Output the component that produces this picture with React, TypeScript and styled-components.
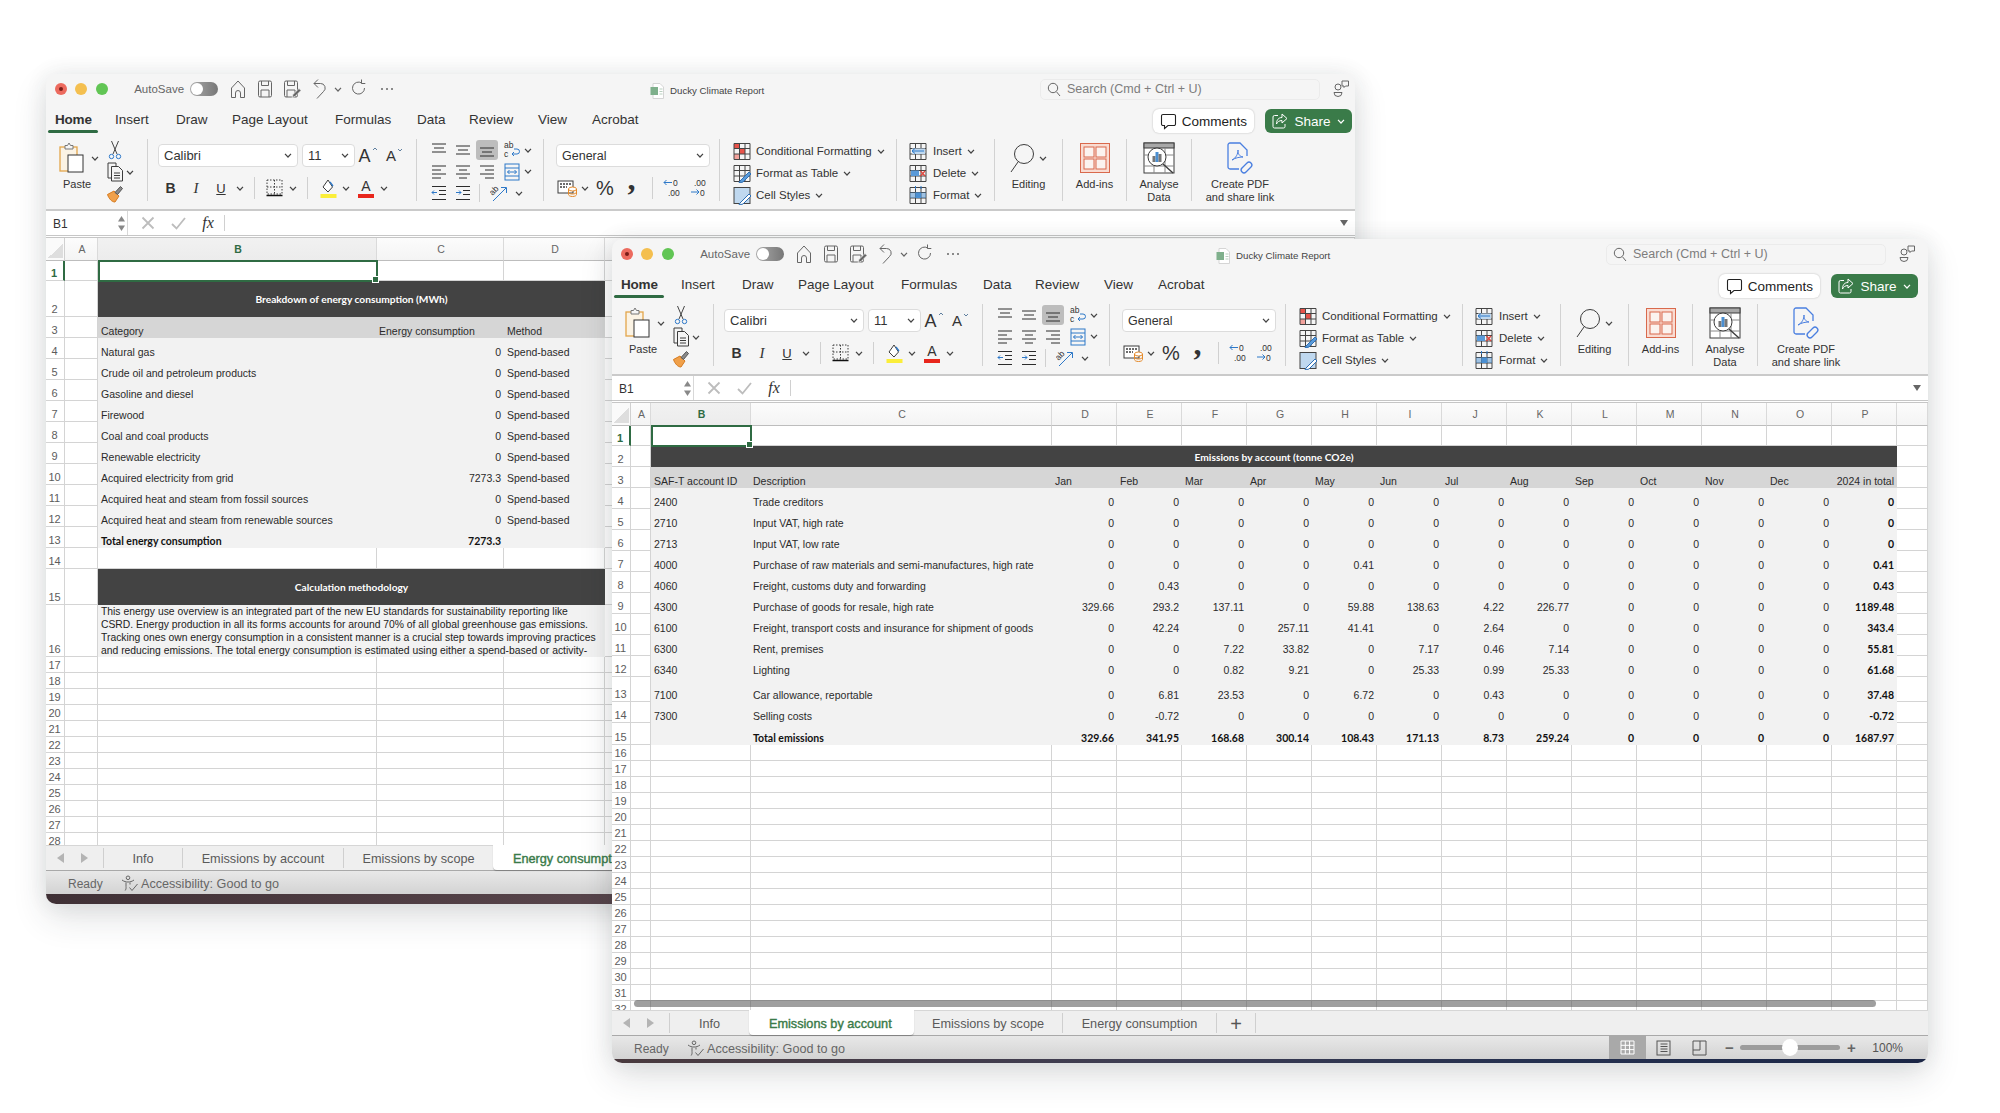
import React from 'react'
import styled, { createGlobalStyle } from 'styled-components'

const GlobalStyle = createGlobalStyle`
    html, body { margin: 0; padding: 0; background: #fff; }
    body { width: 2000px; height: 1113px; overflow: hidden; font-family: "Liberation Sans", Arial, sans-serif; }
`

const Page = styled.div`
    position: relative;
    width: 2000px;
    height: 1113px;
    background: #fff;
    overflow: hidden;
`

const Win = styled.div<{ $x: number; $y: number; $w: number; $h: number }>`
    position: absolute;
    left: ${p => p.$x}px;
    top: ${p => p.$y}px;
    width: ${p => p.$w}px;
    height: ${p => p.$h}px;
    border-radius: 10px;
    background: #f5f5f5;
    box-shadow: 0 14px 34px rgba(40, 50, 60, 0.14), 0 0 22px rgba(40, 50, 60, 0.09);
    overflow: hidden;
    display: flex;
    flex-direction: column;
`

const TitleBar = styled.div`
    height: 30px;
    display: grid;
    grid-template-columns: 604px 390px 280px auto;
    align-items: center;
`

const LeftCluster = styled.div`
    display: flex;
    align-items: center;
    padding-left: 9px;
`

const Light = styled.span<{ $c: string }>`
    width: 12px;
    height: 12px;
    border-radius: 50%;
    background: ${p => p.$c};
    margin-right: 8.4px;
    flex: none;
    display: flex;
    align-items: center;
    justify-content: center;
`

const Pip = styled.span`
    width: 4px;
    height: 4px;
    border-radius: 50%;
    background: #7a1c17;
`

const AutoSave = styled.span`
    margin-left: 18px;
    font-size: 11.5px;
    color: #666;
`

const Toggle = styled.span`
    margin: 0 6px 0 6px;
    width: 28px;
    height: 14px;
    border-radius: 8px;
    background: linear-gradient(90deg, #aaa, #777);
    position: relative;
    flex: none;
    &::after {
        content: '';
        position: absolute;
        left: 1px;
        top: 1px;
        width: 12px;
        height: 12px;
        border-radius: 50%;
        background: #fff;
    }
`

const Slot = styled.div<{ $w: number }>`
    width: ${p => p.$w}px;
    flex: none;
    display: flex;
    align-items: center;
    justify-content: center;
`

const FileTitle = styled.div`
    display: flex;
    align-items: center;
    gap: 6px;
    font-size: 9.7px;
    color: #444;
    padding-top: 3px;
`

const Search = styled.div`
    height: 21px;
    box-sizing: border-box;
    border: 1px solid #ebebeb;
    border-radius: 5px;
    display: flex;
    align-items: center;
    gap: 6px;
    padding-left: 6px;
    font-size: 12.5px;
    color: #7d7d7d;
    font-weight: 500;
`

const People = styled.div`
    padding-left: 13px;
    display: flex;
`

const TabRow = styled.div<{ $inset: number }>`
    height: 30px;
    display: flex;
    align-items: center;
    justify-content: space-between;
    padding: 0 ${p => p.$inset}px 0 9px;
`

const RibbonTabs = styled.div`
    display: grid;
    grid-template-columns: 60px 61px 56px 103px 82px 52px 69px 54px auto;
    font-size: 13.5px;
    color: #333;
`

const RibbonTab = styled.div<{ $on?: boolean }>`
    position: relative;
    height: 30px;
    line-height: 32px;
    font-weight: ${p => (p.$on ? 700 : 400)};
    letter-spacing: ${p => (p.$on ? '-0.2px' : '0')};
    &::after {
        content: '';
        display: ${p => (p.$on ? 'block' : 'none')};
        position: absolute;
        left: -7px;
        top: 26px;
        width: 50px;
        height: 3px;
        border-radius: 2px;
        background: #2f6b43;
    }
`

const RowEnd = styled.div`
    display: flex;
    gap: 11px;
    margin-top: 3px;
`

const CommentsBtn = styled.div`
    width: 101px;
    height: 24px;
    box-sizing: border-box;
    padding-top: 1px;
    background: #fff;
    border-radius: 6px;
    box-shadow: 0 0 2px rgba(0, 0, 0, 0.25);
    display: flex;
    align-items: center;
    justify-content: center;
    gap: 5px;
    font-size: 13.5px;
    color: #222;
`

const ShareBtn = styled.div`
    width: 87px;
    height: 24px;
    box-sizing: border-box;
    padding-top: 1px;
    background: #3a7b49;
    border-radius: 6px;
    display: flex;
    align-items: center;
    justify-content: center;
    gap: 6px;
    font-size: 13.5px;
    color: #fff;
`

const Ribbon = styled.div`
    height: 75px;
    box-sizing: content-box;
    border-bottom: 2px solid #cacaca;
    display: flex;
`

const Group = styled.div<{ $w: number; $pad?: number; $last?: boolean }>`
    width: ${p => p.$w}px;
    box-sizing: border-box;
    height: 62px;
    margin-top: 5px;
    padding-left: ${p => p.$pad || 0}px;
    border-right: ${p => (p.$last ? '0' : '1px solid #d2d2d2')};
    display: flex;
    flex: none;
`

const Stack = styled.div<{ $top?: number }>`
    display: flex;
    flex-direction: column;
    padding-top: ${p => p.$top || 0}px;
`

const Line = styled.div<{ $h: number; $top?: number }>`
    height: ${p => p.$h}px;
    margin-top: ${p => p.$top || 0}px;
    display: flex;
    align-items: center;
    flex: none;
`

const Label = styled.div`
    font-size: 11px;
    line-height: 12.5px;
    color: #333;
    text-align: center;
    white-space: nowrap;
`

const PasteCol = styled.div`
    width: 32px;
    flex: none;
    display: flex;
    flex-direction: column;
    align-items: flex-start;
    gap: 5px;
    padding-top: 3px;
    ${Label} { margin-left: 4px; }
`

const PasteChev = styled.div`
    width: 8px;
    height: 38px;
    display: flex;
    align-items: center;
    margin-right: 5px;
`

const Combo = styled.div<{ $w: number; $fs?: number }>`
    width: ${p => p.$w}px;
    height: 23px;
    box-sizing: border-box;
    flex: none;
    background: #fff;
    border: 1px solid #dcdcdc;
    border-radius: 4px;
    display: flex;
    align-items: center;
    justify-content: space-between;
    padding: 0 5px;
    font-size: ${p => p.$fs || 12.5}px;
    color: #333;
`

const Sep = styled.div<{ $h?: number }>`
    width: 1px;
    height: ${p => p.$h || 22}px;
    background: #d0d0d0;
`

const Glyph = styled.span<{ $size: number; $bold?: boolean; $serif?: boolean; $italic?: boolean; $under?: boolean; $c?: string }>`
    font-size: ${p => p.$size}px;
    font-weight: ${p => (p.$bold ? 700 : 400)};
    font-style: ${p => (p.$italic ? 'italic' : 'normal')};
    font-family: ${p => (p.$serif ? '"Liberation Serif", serif' : 'inherit')};
    text-decoration: ${p => (p.$under ? 'underline' : 'none')};
    color: ${p => p.$c || '#333'};
    line-height: 1;
`

const GrowA = styled.span`
    display: flex;
    align-items: flex-start;
    gap: 1px;
`

const ColorA = styled.span<{ $c: string }>`
    display: flex;
    flex-direction: column;
    align-items: center;
    font-size: 14px;
    line-height: 15px;
    color: #333;
    &::after {
        content: '';
        width: 16px;
        height: 4px;
        background: ${p => p.$c};
    }
`

const OnBox = styled.div`
    width: 22px;
    height: 20px;
    border-radius: 3px;
    background: #bdbdbd;
    display: flex;
    align-items: center;
    justify-content: center;
`

const Comma = styled.span`
    font-family: "Liberation Serif", serif;
    font-weight: 700;
    font-size: 32px;
    line-height: 22px;
    color: #333;
    transform: translateY(-9px);
`

const ListRow = styled.div`
    height: 22px;
    flex: none;
    display: flex;
    align-items: center;
    font-size: 11.5px;
    color: #333;
    white-space: nowrap;
    gap: 5px;
`

const BigCol = styled.div`
    flex: 1;
    display: flex;
    flex-direction: column;
    align-items: center;
`

const BigIcon = styled.div`
    height: 38px;
    flex: none;
    display: flex;
    align-items: center;
    gap: 5px;
    margin-bottom: 1px;
`

const Formula = styled.div`
    height: 27px;
    box-sizing: border-box;
    background: #fff;
    border-bottom: 3px double #c6c6c6;
    display: flex;
    align-items: center;
    padding-right: 7px;
`

const NameBox = styled.div`
    width: 82px;
    height: 100%;
    box-sizing: border-box;
    border-right: 1px solid #d8d8d8;
    display: flex;
    align-items: center;
    justify-content: space-between;
    padding: 1px 2px 0 7px;
    font-size: 12px;
    color: #333;
`

const FormulaIcons = styled.div`
    display: flex;
    align-items: center;
    flex: 1;
    padding-left: 5px;
`

const FxText = styled.span`
    font-family: "Liberation Serif", serif;
    font-style: italic;
    font-size: 16px;
    color: #333;
`

const SheetArea = styled.div`
    position: relative;
    height: 607px;
    background: #fff;
    overflow: hidden;
`

const Grid = styled.div<{ $cols: string; $rows: string }>`
    display: grid;
    grid-template-columns: ${p => p.$cols};
    grid-template-rows: ${p => p.$rows};
    height: 100%;
    font-size: 10.5px;
    color: #2b2b2b;
`

const Corner = styled.div`
    background: #fafafa;
    border-right: 1px solid #d0d0d0;
    border-bottom: 1px solid #bdbdbd;
    display: flex;
    align-items: flex-end;
    justify-content: flex-end;
    padding: 0 1px 2px 0;
    &::after {
        content: '';
        width: 15px;
        height: 15px;
        background: linear-gradient(135deg, transparent 50%, #dedede 50%);
    }
`

const ColHead = styled.div<{ $on?: boolean }>`
    box-sizing: border-box;
    background: ${p => (p.$on ? 'linear-gradient(#f1f1f1, #ececec)' : 'linear-gradient(#fcfcfc, #f4f4f4)')};
    border-right: 1px solid #dadada;
    border-bottom: 1px solid #bdbdbd;
    display: flex;
    align-items: center;
    justify-content: center;
    padding: 0 0 1px 2px;
    font-size: 10.5px;
    color: ${p => (p.$on ? '#2f6b43' : '#666')};
    font-weight: ${p => (p.$on ? 700 : 400)};
`

const RowHead = styled.div<{ $on?: boolean }>`
    box-sizing: border-box;
    background: #fff;
    border-right: ${p => (p.$on ? '2px solid #2f6b43' : '1px solid #d4d4d4')};
    border-bottom: 1px solid #d4d4d4;
    display: flex;
    align-items: flex-end;
    justify-content: center;
    font-size: 11px;
    line-height: 13px;
    padding-right: 1px;
    color: ${p => (p.$on ? '#2f6b43' : '#5c5c5c')};
    font-weight: ${p => (p.$on ? 700 : 400)};
`

const Blank = styled.div`
    box-sizing: border-box;
    border-right: 1px solid #d4d4d4;
    border-bottom: 1px solid #d4d4d4;
    min-width: 0;
`

const Selected = styled.div`
    box-sizing: border-box;
    border: 2px solid #2f6b43;
    position: relative;
    margin: -1px -1px -1px 0;
    z-index: 3;
    &::after {
        content: '';
        position: absolute;
        right: -3px;
        bottom: -3px;
        width: 5px;
        height: 5px;
        background: #2f6b43;
        border: 1px solid #fff;
    }
`

const Band = styled.div<{ $span: number }>`
    grid-column: span ${p => p.$span};
    background: #434343;
    color: #fff;
    font-family: Lato, "Liberation Sans", sans-serif;
    font-weight: 700;
    font-size: 10.2px;
    display: flex;
    align-items: center;
    justify-content: center;
    white-space: nowrap;
`

const Cell = styled.div<{ $head?: boolean; $right?: boolean; $bold?: boolean; $tight?: boolean }>`
    background: ${p => (p.$head ? '#d6d6d6' : '#f2f2f2')};
    display: flex;
    align-items: flex-end;
    justify-content: ${p => (p.$right ? 'flex-end' : 'flex-start')};
    padding: 0 3px 0 ${p => (p.$tight ? 2 : 3)}px;
    line-height: 13px;
    white-space: nowrap;
    overflow: hidden;
    min-width: 0;
    font-family: ${p => (p.$bold ? 'Lato, "Liberation Sans", sans-serif' : 'inherit')};
    font-weight: ${p => (p.$bold ? 700 : 400)};
    color: ${p => (p.$bold ? '#111' : 'inherit')};
`

const Note = styled.div<{ $span: number }>`
    grid-column: span ${p => p.$span};
    background: #f2f2f2;
    padding: 0 3px;
    font-size: 10.35px;
    line-height: 13px;
    white-space: nowrap;
    overflow: hidden;
    color: #222;
`

const ScrollThumb = styled.div`
    position: absolute;
    left: 22px;
    bottom: 3px;
    width: 1242px;
    height: 7px;
    border-radius: 4px;
    background: rgba(90, 90, 90, 0.58);
`

const SheetTabs = styled.div`
    height: 26px;
    box-sizing: border-box;
    background: #efefef;
    border-top: 1px solid #d6d6d6;
    border-bottom: 1px solid #a9a9a9;
    display: flex;
    position: relative;
    font-size: 12.7px;
    color: #5a5a5a;
`

const Arrows = styled.div`
    width: 57px;
    flex: none;
    box-sizing: border-box;
    display: flex;
    align-items: center;
    gap: 17px;
    padding-left: 11px;
`

const Tri = styled.span<{ $dir: 'l' | 'r' }>`
    width: 0;
    height: 0;
    border-top: 5px solid transparent;
    border-bottom: 5px solid transparent;
    border-right: ${p => (p.$dir === 'l' ? '7px solid #b4b4b4' : '0')};
    border-left: ${p => (p.$dir === 'r' ? '7px solid #b4b4b4' : '0')};
`

const SheetTab = styled.div<{ $w: number; $on?: boolean; $noSep?: boolean }>`
    width: ${p => p.$w}px;
    flex: none;
    height: ${p => (p.$on ? '25px' : '20px')};
    margin-top: ${p => (p.$on ? '-1px' : '2px')};
    box-sizing: border-box;
    display: flex;
    align-items: center;
    justify-content: ${p => (p.$on ? 'flex-start' : 'center')};
    padding-left: ${p => (p.$on ? '20px' : '0')};
    padding-top: ${p => (p.$on ? '3px' : '1px')};
    white-space: nowrap;
    overflow: hidden;
    background: ${p => (p.$on ? '#fff' : 'transparent')};
    border-radius: ${p => (p.$on ? '0 0 4px 4px' : '0')};
    box-shadow: ${p => (p.$on ? '0 1px 1px rgba(0,0,0,.25)' : 'none')};
    color: ${p => (p.$on ? '#3a7b49' : 'inherit')};
    -webkit-text-stroke: ${p => (p.$on ? '0.4px #3a7b49' : '0')};
    border-left: ${p => (p.$noSep || p.$on ? '0' : '1px solid #cfcfcf')};
`

const TabEnd = styled.div`
    width: 1px;
    height: 20px;
    margin-top: 2px;
    background: #cfcfcf;
`

const StatusBar = styled.div`
    height: 23px;
    box-sizing: border-box;
    background: linear-gradient(#e8e8e8, #d3d3d3);
    display: flex;
    align-items: center;
    font-size: 12px;
    color: #666;
    flex: none;
`

const Ready = styled.span`
    margin-left: 22px;
    width: 53px;
    padding-top: 2px;
`

const Access = styled.span`
    display: flex;
    align-items: center;
    gap: 3px;
    font-size: 12.6px;
    padding-top: 2px;
`

const ViewArea = styled.div`
    margin-left: auto;
    padding-right: 25px;
    display: flex;
    align-items: center;
    height: 100%;
`

const ViewOn = styled.div`
    width: 37px;
    height: 100%;
    background: #a9a9a9;
    display: flex;
    align-items: center;
    justify-content: center;
`

const ZoomTrack = styled.div`
    width: 100px;
    height: 5px;
    border-radius: 3px;
    background: #9c9c9c;
    position: relative;
    margin-left: -1px;
    &::after {
        content: '';
        position: absolute;
        left: 42px;
        top: -6px;
        width: 16px;
        height: 17px;
        border-radius: 50%;
        background: #fff;
    }
`

const Percent = styled.span`
    margin-left: 10px;
    font-size: 12px;
    color: #555;
`

const Strip = styled.div<{ $h: number; $bg: string }>`
    height: ${p => p.$h}px;
    flex: none;
    background: ${p => p.$bg};
`

type IcProps = { w: number; h: number; s?: string; sw?: number; children: React.ReactNode }
const Ic = ({ w, h, s = '#3c3c3c', sw = 1, children }: IcProps) => (
    <svg width={w} height={h} viewBox={`0 0 ${w} ${h}`} fill="none" stroke={s} strokeWidth={sw} style={{ flex: 'none' }}>
        {children}
    </svg>
)

const Chev = ({ c = '#444' }: { c?: string }) => (
    <Ic w={8} h={5} s={c} sw={1.2}><polyline points="1,0.8 4,4 7,0.8" /></Ic>
)

const Caret = ({ down }: { down?: boolean }) => (
    <Ic w={6} h={4} s="#5f7f9f"><path d={down ? 'M1 1l2 2 2-2' : 'M1 3l2-2 2 2'} /></Ic>
)

const SMALL = { fontSize: 8.5, fontFamily: 'Liberation Sans', fill: '#333', stroke: 'none' } as const

const HomeIcon = () => (
    <Ic w={18} h={20} s="#666"><path d="M2.5 9 9 2l6.5 7v9.5h-4V14a2.5 2.5 0 0 0-5 0v4.5h-4z" /></Ic>
)
const SaveShape = () => (
    <>
        <path d="M1.5 3.5A1.5 1.5 0 0 1 3 2h10a1.5 1.5 0 0 1 1.5 1.5v13A1.5 1.5 0 0 1 13 18H3a1.5 1.5 0 0 1-1.5-1.5z" />
        <path d="M4.5 2v4.5h7V2M4 18v-7h8v7" />
    </>
)
const SaveIcon = () => <Ic w={16} h={20} s="#666"><SaveShape /></Ic>
const SaveAsIcon = () => (
    <Ic w={18} h={20} s="#666">
        <SaveShape />
        <path d="M9 18.5l1-3 6-6 2 2-6 6z" fill="#666" stroke="#f5f5f5" strokeWidth={0.7} />
    </Ic>
)
const UndoIcon = () => (
    <Ic w={16} h={22} s="#666"><path d="M3 5.5h6.5a4.5 4.5 0 0 1 3 8L6 20.5" /><path d="M7 1.5 3 5.5l4 4" /></Ic>
)
const RedoIcon = () => (
    <Ic w={16} h={20} s="#666"><path d="M13.5 9a6 6 0 1 1-2.8-5" /><path d="M10.5 0.5v4h3.8" /></Ic>
)
const DotsIcon = () => (
    <Ic w={14} h={4} s="none"><circle cx="2" cy="2" r="1" fill="#666" /><circle cx="7" cy="2" r="1" fill="#666" /><circle cx="12" cy="2" r="1" fill="#666" /></Ic>
)
const DocIcon = () => (
    <Ic w={14} h={16} s="#d5d5d5">
        <path d="M3 .5h7l3.5 3.5v11.5H3z" fill="#fff" />
        <rect x="0.5" y="4" width="7.5" height="8" fill="#7fb08c" stroke="none" />
        <path d="M9.5 6h3M9.5 8.5h3M9.5 11h3" stroke="#b9cfbf" />
    </Ic>
)
const SearchIcon = () => (
    <Ic w={14} h={15} s="#666"><circle cx="6" cy="6" r="4.7" /><path d="M9.5 9.8 13 14" /></Ic>
)
const PeopleIcon = () => (
    <Ic w={17} h={18} s="#666">
        <circle cx="5" cy="7" r="3" />
        <path d="M1 12.5h8a4 4 0 0 1-8 0z" />
        <path d="M9 1h6.5v5h-3l-1.5 1.5V6H9z" />
    </Ic>
)
const CommentIcon = () => (
    <Ic w={17} h={17} s="#222" sw={1.1}><path d="M3 1.5h11a1.5 1.5 0 0 1 1.5 1.5v8a1.5 1.5 0 0 1-1.5 1.5H8L4.5 15.5v-3H3A1.5 1.5 0 0 1 1.5 11V3A1.5 1.5 0 0 1 3 1.5z" /></Ic>
)
const ShareIcon = () => (
    <Ic w={16} h={16} s="#fff"><path d="M6 2.5H2.5a1.5 1.5 0 0 0-1.5 1.5v9.5A1.5 1.5 0 0 0 2.5 15h9a1.5 1.5 0 0 0 1.5-1.5V11" /><path d="M10 1l5 4.5L10 10V7.5C7 7.5 5.5 9 4.5 11c0-4 2-6.5 5.5-6.5z" /></Ic>
)
const ClipboardIcon = () => (
    <Ic w={26} h={31}>
        <rect x="1" y="5" width="17" height="24" fill="#fbf3e4" stroke="#e2a54a" strokeWidth={1.3} />
        <path d="M6 5V3.5h2.5L10 1l1.5 2.5H14V7H6z" fill="#f5f5f5" stroke="#777" />
        <rect x="9" y="13" width="15" height="17" fill="#fff" stroke="#333" />
    </Ic>
)
const ScissorsIcon = () => (
    <Ic w={14} h={20} s="#444">
        <path d="M3.5 1 9 14M10.5 1 5 14" />
        <circle cx="3.5" cy="16.5" r="2.2" stroke="#2d78c8" />
        <circle cx="10.5" cy="16.5" r="2.2" stroke="#2d78c8" />
    </Ic>
)
const CopyIcon = () => (
    <Ic w={17} h={20}>
        <path d="M9 4V1H1v15h3" />
        <path d="M4.5 4.5h7l4 4V19h-11z" fill="#f5f5f5" />
        <path d="M7 11h6M7 13.5h6M7 16h6" />
    </Ic>
)
const BrushIcon = () => (
    <Ic w={18} h={18}>
        <path d="M1.5 9.5 8 6l5 5-4 6c-3 0-6-3-7.5-7.5z" fill="#f0a04a" stroke="#d67a1e" />
        <path d="M9 7.5 14.5 1.5l2 2-5 6z" fill="#8a8a8a" stroke="#555" />
    </Ic>
)
const BordersIcon = () => (
    <Ic w={17} h={18}>
        <path d="M1 1h15v14H1zM8.5 1v14M1 8h15" strokeDasharray="1.5 1.5" />
        <path d="M0.5 16.5h16" strokeWidth={1.5} stroke="#111" />
    </Ic>
)
const FillIcon = () => (
    <Ic w={17} h={19}>
        <path d="M8 1 3 8l5 5 4.5-5z" fill="#fff" />
        <path d="M10 3l3 4" stroke="#2d78c8" strokeWidth={1.3} />
        <rect x="0.5" y="15" width="16" height="4" fill="#fbee3a" stroke="none" />
    </Ic>
)
type AlignKind = 'top' | 'mid' | 'bot' | 'left' | 'center' | 'right'
const AlignIcon = ({ kind }: { kind: AlignKind }) => {
    const paths: Record<AlignKind, string> = {
        top: 'M1 2h14M3 6h10M1 10h14',
        mid: 'M1 4h14M3 8h10M1 12h14',
        bot: 'M1 6h14M3 10h10M1 14h14',
        left: 'M1 2h14M1 6h9M1 10h14M1 14h9',
        center: 'M1 2h14M4 6h8M1 10h14M4 14h8',
        right: 'M1 2h14M6 6h9M1 10h14M6 14h9',
    }
    return <Ic w={16} h={16} s="#2c2c2c"><path d={paths[kind]} /></Ic>
}
const WrapIcon = () => (
    <Ic w={18} h={20}>
        <text x="1" y="8" style={SMALL}>ab</text>
        <text x="1" y="17" style={SMALL}>c</text>
        <path d="M9 14h5a2.5 2.5 0 0 0 0-5h-3M11 12l-2 2 2 2" stroke="#2d78c8" />
    </Ic>
)
const MergeIcon = () => (
    <Ic w={16} h={20}>
        <rect x="1" y="2" width="14" height="16" stroke="#2d78c8" />
        <path d="M1 6h14M1 14h14" stroke="#2d78c8" />
        <path d="M3.5 10h9M5.5 8l-2 2 2 2M10.5 8l2 2-2 2" stroke="#2d78c8" />
    </Ic>
)
const IndentIcon = ({ out }: { out?: boolean }) => (
    <Ic w={16} h={16} s="#2c2c2c">
        <path d="M1 1.5h14M8 5.5h7M8 9.5h7M1 14.5h14" />
        <path d={out ? 'M6 7.5H1M3 5.5l-2 2 2 2' : 'M1 7.5h5M4 5.5l2 2-2 2'} stroke="#2d78c8" />
    </Ic>
)
const OrientIcon = () => (
    <Ic w={18} h={20}>
        <text x="0" y="9" transform="rotate(-45 6 8)" style={SMALL}>ab</text>
        <path d="M3 18 16 5M11 4.5h5.5V10" stroke="#2d78c8" />
    </Ic>
)
const CurrencyIcon = () => (
    <Ic w={21} h={18}>
        <rect x="1" y="2" width="15" height="12" fill="#fff" />
        <path d="M3 5h11M3 8h7" strokeWidth={1.4} strokeDasharray="2 1" />
        <ellipse cx="15.5" cy="10" rx="4" ry="2" fill="#fff" stroke="#e58a2a" />
        <path d="M11.5 10v5.5c0 1 1.5 2 4 2s4-1 4-2V10M11.5 13c0 1 1.5 2 4 2s4-1 4-2" stroke="#e58a2a" />
    </Ic>
)
const DecIcon = ({ more }: { more?: boolean }) => (
    <Ic w={22} h={22}>
        <text x={more ? 4 : 10} y="9" style={SMALL}>{more ? '.00' : '0'}</text>
        <text x={more ? 10 : 5} y="19" style={SMALL}>{more ? '0' : '.00'}</text>
        {more
            ? <path d="M1 15h8M6.5 12.5 9 15l-2.5 2.5" stroke="#2d78c8" />
            : <path d="M9 5.5H1M3.5 3 1 5.5 3.5 8" stroke="#2d78c8" />}
    </Ic>
)
const TableBase = () => (
    <path d="M1 1.5h16v16H1zM1 6.5h16M1 12h16M6.5 1.5v16M12 1.5v16" stroke="#444" />
)
const CondIcon = () => (
    <Ic w={18} h={19}>
        <rect x="1" y="1.5" width="5.5" height="5" fill="#e8534a" stroke="none" />
        <rect x="6.5" y="6.5" width="5.5" height="5.5" fill="#e8534a" stroke="none" />
        <rect x="1" y="12" width="5.5" height="5.5" fill="#f2a29c" stroke="none" />
        <TableBase />
    </Ic>
)
const TableFmtIcon = () => (
    <Ic w={18} h={19}>
        <TableBase />
        <path d="M7 17l9-9 2 2-8 8-4 1z" fill="#5a9ad8" stroke="#2d6fb5" />
    </Ic>
)
const CellStyleIcon = () => (
    <Ic w={18} h={19}>
        <rect x="1" y="1.5" width="16" height="16" fill="#bfd8ef" stroke="#444" />
        <path d="M7 17l9-9 2 2-8 8-4 1z" fill="#fff" stroke="#2d6fb5" />
    </Ic>
)
const InsertIcon = () => (
    <Ic w={18} h={19}>
        <TableBase />
        <rect x="3" y="6.5" width="13" height="5.5" fill="#bfd8ef" stroke="none" />
        <path d="M15 9H3M6 6.5 3 9l3 2.5" stroke="#2d78c8" />
    </Ic>
)
const DeleteIcon = () => (
    <Ic w={18} h={19}>
        <TableBase />
        <rect x="2" y="6.5" width="8" height="5.5" fill="#5a9ad8" stroke="none" />
        <path d="M11.5 7 16 12M16 7l-4.5 5" stroke="#e0483e" strokeWidth={1.3} />
    </Ic>
)
const FormatIcon = () => (
    <Ic w={18} h={19}>
        <TableBase />
        <rect x="6.5" y="6.5" width="5.5" height="5.5" fill="#4a8fd2" stroke="none" />
        <rect x="1" y="6.5" width="16" height="5.5" fill="#4a8fd2" fillOpacity={0.5} stroke="none" />
        <path d="M6.5 0v3M12 0v3" stroke="#2d78c8" />
    </Ic>
)
const MagnifierIcon = () => (
    <Ic w={24} h={31} s="#3c3c3c">
        <circle cx="14" cy="11" r="9.5" />
        <path d="M8 19 1 29" />
    </Ic>
)
const AddInsIcon = () => (
    <Ic w={30} h={30} s="#d9694c" sw={1}>
        <rect x="0.5" y="0.5" width="29" height="29" fill="#f9dcd2" />
        <rect x="4" y="4" width="10" height="10" fill="#fbf3ef" />
        <rect x="16" y="4" width="10" height="10" fill="#fbf3ef" />
        <rect x="4" y="16" width="10" height="10" fill="#fbf3ef" />
        <rect x="16" y="16" width="10" height="10" fill="#fbf3ef" />
    </Ic>
)
const AnalyseIcon = () => (
    <Ic w={33} h={33}>
        <rect x="1" y="1" width="30" height="30" fill="#fff" />
        <rect x="1" y="1" width="30" height="5" fill="#a8a8a8" />
        <path d="M1 13h30M1 24h30M11 6v25M22 6v25" stroke="#888" />
        <circle cx="14" cy="15" r="9" fill="#fff" />
        <rect x="9.5" y="14" width="3" height="6" fill="#777" stroke="none" />
        <rect x="12.5" y="10" width="3" height="10" fill="#4a8fd2" stroke="none" />
        <rect x="15.5" y="12" width="3" height="8" fill="#777" stroke="none" />
        <path d="M20 22l10 9" strokeWidth={1.4} />
    </Ic>
)
const PdfIcon = () => (
    <Ic w={28} h={34} s="#4a7fe0" sw={1.3}>
        <path d="M13 28H4a2 2 0 0 1-2-2V4a2 2 0 0 1 2-2h10l7 7v6" />
        <path d="M6 19c4-2 6-6 6-10 0 4 1 6 5 7-4 0-8 1-11 3z" strokeWidth={1} />
        <path d="M15 28l6-6a2.8 2.8 0 0 1 4 4l-5 5a2.8 2.8 0 0 1-4-4" />
    </Ic>
)
const CrossIcon = () => (
    <Ic w={14} h={14} s="#bdbdbd" sw={1.8}><path d="M1.5 1.5l11 11M12.5 1.5l-11 11" /></Ic>
)
const CheckIcon = () => (
    <Ic w={15} h={13} s="#bdbdbd" sw={1.8}><path d="M1 7l4.5 4.5L14 1" /></Ic>
)
const Stepper = () => (
    <Ic w={7} h={17} s="none">
        <path d="M3.5 1 7 6.5H0z" fill="#888" />
        <path d="M3.5 16 7 10.5H0z" fill="#888" />
    </Ic>
)
const AccessIcon = () => (
    <Ic w={17} h={17} s="#666">
        <circle cx="7" cy="2.8" r="1.8" />
        <path d="M1 5c2 1.5 4 2 6 2s4-.5 6-2M5 7.5v4c0 1 .5 2-.8 4M9 7.5v2" />
        <path d="M8.5 12.5l2.5 3 5.5-6.5" />
    </Ic>
)
const GridViewIcon = () => (
    <Ic w={15} h={15} s="#fff"><path d="M1 1h13v13H1zM1 5.3h13M1 9.6h13M5.3 1v13M9.6 1v13" /></Ic>
)
const PageViewIcon = () => (
    <Ic w={15} h={16} s="#555">
        <rect x="1" y="1" width="13" height="14" />
        <path d="M4.5 4h7M4.5 6.5h7M4.5 9h7M4.5 11.5h7" />
    </Ic>
)
const BreakViewIcon = () => (
    <Ic w={15} h={16} s="#555"><path d="M1 1h13v14H1zM1 10h7V1" /></Ic>
)

const TABS = ['Home', 'Insert', 'Draw', 'Page Layout', 'Formulas', 'Data', 'Review', 'View', 'Acrobat']

const Chrome = ({ inset }: { inset: number }) => (
    <>
        <TitleBar>
            <LeftCluster>
                <Light $c="#ec6a5e"><Pip /></Light>
                <Light $c="#f4bf4f" />
                <Light $c="#61c554" />
                <AutoSave>AutoSave</AutoSave>
                <Toggle />
                <Slot $w={27}><HomeIcon /></Slot>
                <Slot $w={27}><SaveIcon /></Slot>
                <Slot $w={27}><SaveAsIcon /></Slot>
                <Slot $w={27}><UndoIcon /></Slot>
                <Slot $w={11}><Chev c="#666" /></Slot>
                <Slot $w={31}><RedoIcon /></Slot>
                <Slot $w={25}><DotsIcon /></Slot>
            </LeftCluster>
            <FileTitle><DocIcon />Ducky Climate Report</FileTitle>
            <Search><SearchIcon />Search (Cmd + Ctrl + U)</Search>
            <People><PeopleIcon /></People>
        </TitleBar>
        <TabRow $inset={inset}>
            <RibbonTabs>
                {TABS.map((t, i) => <RibbonTab key={t} $on={i === 0}>{t}</RibbonTab>)}
            </RibbonTabs>
            <RowEnd>
                <CommentsBtn><CommentIcon />Comments</CommentsBtn>
                <ShareBtn><ShareIcon />Share<Chev c="#fff" /></ShareBtn>
            </RowEnd>
        </TabRow>
        <Ribbon>
            <Group $w={102} $pad={13}>
                <PasteCol><ClipboardIcon /><Label>Paste</Label></PasteCol>
                <PasteChev><Chev /></PasteChev>
                <Stack>
                    <Line $h={22}><Slot $w={22}><ScissorsIcon /></Slot></Line>
                    <Line $h={22}><Slot $w={22}><CopyIcon /></Slot><Chev /></Line>
                    <Line $h={21}><Slot $w={22}><BrushIcon /></Slot></Line>
                </Stack>
            </Group>
            <Group $w={269} $pad={10}>
                <Stack $top={5}>
                    <Line $h={23}>
                        <Combo $w={140} $fs={13}>Calibri<Chev /></Combo>
                        <Slot $w={4} />
                        <Combo $w={53} $fs={13}>11<Chev /></Combo>
                        <Slot $w={26}><GrowA><Glyph $size={18}>A</Glyph><Caret /></GrowA></Slot>
                        <Slot $w={27}><GrowA><Glyph $size={15}>A</Glyph><Caret down /></GrowA></Slot>
                    </Line>
                    <Line $h={22} $top={10}>
                        <Slot $w={25}><Glyph $size={14} $bold>B</Glyph></Slot>
                        <Slot $w={26}><Glyph $size={15} $italic $serif>I</Glyph></Slot>
                        <Slot $w={24}><Glyph $size={13} $under>U</Glyph></Slot>
                        <Slot $w={14}><Chev /></Slot>
                        <Slot $w={14}><Sep /></Slot>
                        <Slot $w={26}><BordersIcon /></Slot>
                        <Slot $w={12}><Chev /></Slot>
                        <Slot $w={16}><Sep /></Slot>
                        <Slot $w={26}><FillIcon /></Slot>
                        <Slot $w={10}><Chev /></Slot>
                        <Slot $w={2} />
                        <Slot $w={26}><ColorA $c="#e8261c">A</ColorA></Slot>
                        <Slot $w={10}><Chev /></Slot>
                    </Line>
                </Stack>
            </Group>
            <Group $w={127} $pad={10}>
                <Stack>
                    <Line $h={22}>
                        <Slot $w={24}><AlignIcon kind="top" /></Slot>
                        <Slot $w={24}><AlignIcon kind="mid" /></Slot>
                        <Slot $w={24}><OnBox><AlignIcon kind="bot" /></OnBox></Slot>
                        <Slot $w={26}><WrapIcon /></Slot>
                        <Slot $w={6}><Chev /></Slot>
                    </Line>
                    <Line $h={21}>
                        <Slot $w={24}><AlignIcon kind="left" /></Slot>
                        <Slot $w={24}><AlignIcon kind="center" /></Slot>
                        <Slot $w={24}><AlignIcon kind="right" /></Slot>
                        <Slot $w={26}><MergeIcon /></Slot>
                        <Slot $w={6}><Chev /></Slot>
                    </Line>
                    <Line $h={22}>
                        <Slot $w={24}><IndentIcon out /></Slot>
                        <Slot $w={24}><IndentIcon /></Slot>
                        <Slot $w={8}><Sep $h={18} /></Slot>
                        <Slot $w={32}><OrientIcon /></Slot>
                        <Slot $w={8}><Chev /></Slot>
                    </Line>
                </Stack>
            </Group>
            <Group $w={176} $pad={12}>
                <Stack $top={5}>
                    <Line $h={23}><Combo $w={154}>General<Chev /></Combo></Line>
                    <Line $h={22} $top={10}>
                        <Slot $w={22}><CurrencyIcon /></Slot>
                        <Slot $w={14}><Chev /></Slot>
                        <Slot $w={26}><Glyph $size={20}>%</Glyph></Slot>
                        <Slot $w={27}><Comma>,</Comma></Slot>
                        <Slot $w={14}><Sep /></Slot>
                        <Slot $w={30}><DecIcon /></Slot>
                        <Slot $w={24}><DecIcon more /></Slot>
                    </Line>
                </Stack>
            </Group>
            <Group $w={177} $pad={13}>
                <Stack $top={1}>
                    <ListRow><Slot $w={18}><CondIcon /></Slot>Conditional Formatting<Chev /></ListRow>
                    <ListRow><Slot $w={18}><TableFmtIcon /></Slot>Format as Table<Chev /></ListRow>
                    <ListRow><Slot $w={18}><CellStyleIcon /></Slot>Cell Styles<Chev /></ListRow>
                </Stack>
            </Group>
            <Group $w={98} $pad={11}>
                <Stack $top={1}>
                    <ListRow><Slot $w={20}><InsertIcon /></Slot>Insert<Chev /></ListRow>
                    <ListRow><Slot $w={20}><DeleteIcon /></Slot>Delete<Chev /></ListRow>
                    <ListRow><Slot $w={20}><FormatIcon /></Slot>Format<Chev /></ListRow>
                </Stack>
            </Group>
            <Group $w={68}>
                <BigCol>
                    <BigIcon><MagnifierIcon /><Chev /></BigIcon>
                    <Label>Editing</Label>
                </BigCol>
            </Group>
            <Group $w={64}>
                <BigCol><BigIcon><AddInsIcon /></BigIcon><Label>Add-ins</Label></BigCol>
            </Group>
            <Group $w={65}>
                <BigCol><BigIcon><AnalyseIcon /></BigIcon><Label>Analyse<br />Data</Label></BigCol>
            </Group>
            <Group $w={96} $last>
                <BigCol><BigIcon><PdfIcon /></BigIcon><Label>Create PDF<br />and share link</Label></BigCol>
            </Group>
        </Ribbon>
        <Formula>
            <NameBox>B1<Stepper /></NameBox>
            <FormulaIcons>
                <Slot $w={30}><CrossIcon /></Slot>
                <Slot $w={30}><CheckIcon /></Slot>
                <Slot $w={30}><FxText>fx</FxText></Slot>
                <Slot $w={2}><Sep $h={16} /></Slot>
            </FormulaIcons>
            <Ic w={8} h={6} s="none"><path d="M0 0h8L4 6z" fill="#666" /></Ic>
        </Formula>
    </>
)

const ENERGY: [string, string][] = [
    ['Natural gas', '0'],
    ['Crude oil and petroleum products', '0'],
    ['Gasoline and diesel', '0'],
    ['Firewood', '0'],
    ['Coal and coal products', '0'],
    ['Renewable electricity', '0'],
    ['Acquired electricity from grid', '7273.3'],
    ['Acquired heat and steam from fossil sources', '0'],
    ['Acquired heat and steam from renewable sources', '0'],
]

const range = (from: number, to: number) => {
    const out: number[] = []
    for (let i = from; i <= to; i++) out.push(i)
    return out
}

const EnergySheet = () => (
    <Grid
        $cols="19px 33px 279px 127px 101px 1fr"
        $rows="23px 20px 36px repeat(12, 21px) 36px 52px repeat(12, 16px)"
    >
        <Corner />
        {['A', 'B', 'C', 'D', ''].map(c => <ColHead key={c} $on={c === 'B'}>{c}</ColHead>)}

        <RowHead $on>1</RowHead><Blank /><Selected /><Blank /><Blank /><Blank />

        <RowHead>2</RowHead><Blank />
        <Band $span={3}>Breakdown of energy consumption (MWh)</Band><Blank />

        <RowHead>3</RowHead><Blank />
        <Cell $head>Category</Cell><Cell $head $tight>Energy consumption</Cell><Cell $head>Method</Cell><Blank />

        {ENERGY.map((r, i) => (
            <React.Fragment key={r[0]}>
                <RowHead>{i + 4}</RowHead><Blank />
                <Cell>{r[0]}</Cell><Cell $right>{r[1]}</Cell><Cell>Spend-based</Cell><Blank />
            </React.Fragment>
        ))}

        <RowHead>13</RowHead><Blank />
        <Cell $bold>Total energy consumption</Cell><Cell $right $bold>7273.3</Cell><Cell /><Blank />

        <RowHead>14</RowHead><Blank /><Blank /><Blank /><Blank /><Blank />

        <RowHead>15</RowHead><Blank />
        <Band $span={3}>Calculation methodology</Band><Blank />

        <RowHead>16</RowHead><Blank />
        <Note $span={3}>
            This energy use overview is an integrated part of the new EU standards for sustainability reporting like<br />
            CSRD. Energy production in all its forms accounts for around 70% of all global greenhouse gas emissions.<br />
            Tracking ones own energy consumption in a consistent manner is a crucial step towards improving practices<br />
            and reducing emissions. The total energy consumption is estimated using either a spend-based or activity-
        </Note>
        <Blank />

        {range(17, 28).map(n => (
            <React.Fragment key={n}>
                <RowHead>{n}</RowHead><Blank /><Blank /><Blank /><Blank /><Blank />
            </React.Fragment>
        ))}
    </Grid>
)

const MONTHS = ['Jan', 'Feb', 'Mar', 'Apr', 'May', 'Jun', 'Jul', 'Aug', 'Sep', 'Oct', 'Nov', 'Dec']
const COLS = ['A', 'B', 'C', 'D', 'E', 'F', 'G', 'H', 'I', 'J', 'K', 'L', 'M', 'N', 'O', 'P', '']

const zeros = ['0', '0', '0', '0', '0', '0', '0', '0']
const ACCOUNTS: { id: string; name: string; vals: string[]; total: string }[] = [
    { id: '2400', name: 'Trade creditors', vals: zeros, total: '0' },
    { id: '2710', name: 'Input VAT, high rate', vals: zeros, total: '0' },
    { id: '2713', name: 'Input VAT, low rate', vals: zeros, total: '0' },
    { id: '4000', name: 'Purchase of raw materials and semi-manufactures, high rate', vals: ['0', '0', '0', '0', '0.41', '0', '0', '0'], total: '0.41' },
    { id: '4060', name: 'Freight, customs duty and forwarding', vals: ['0', '0.43', '0', '0', '0', '0', '0', '0'], total: '0.43' },
    { id: '4300', name: 'Purchase of goods for resale, high rate', vals: ['329.66', '293.2', '137.11', '0', '59.88', '138.63', '4.22', '226.77'], total: '1189.48' },
    { id: '6100', name: 'Freight, transport costs and insurance for shipment of goods', vals: ['0', '42.24', '0', '257.11', '41.41', '0', '2.64', '0'], total: '343.4' },
    { id: '6300', name: 'Rent, premises', vals: ['0', '0', '7.22', '33.82', '0', '7.17', '0.46', '7.14'], total: '55.81' },
    { id: '6340', name: 'Lighting', vals: ['0', '0', '0.82', '9.21', '0', '25.33', '0.99', '25.33'], total: '61.68' },
    { id: '7100', name: 'Car allowance, reportable', vals: ['0', '6.81', '23.53', '0', '6.72', '0', '0.43', '0'], total: '37.48' },
    { id: '7300', name: 'Selling costs', vals: ['0', '-0.72', '0', '0', '0', '0', '0', '0'], total: '-0.72' },
]
const TOTALS = ['329.66', '341.95', '168.68', '300.14', '108.43', '171.13', '8.73', '259.24', '0', '0', '0', '0']

const AccountSheet = () => (
    <Grid
        $cols="19px 20px 100px 301px repeat(13, 65px) 1fr"
        $rows="23px 20px repeat(11, 21px) 25px 21px 22px repeat(17, 16px)"
    >
        <Corner />
        {COLS.map(c => <ColHead key={c} $on={c === 'B'}>{c}</ColHead>)}

        <RowHead $on>1</RowHead><Blank /><Selected />
        {range(1, 15).map(i => <Blank key={i} />)}

        <RowHead>2</RowHead><Blank />
        <Band $span={15}>Emissions by account (tonne CO2e)</Band><Blank />

        <RowHead>3</RowHead><Blank />
        <Cell $head>SAF-T account ID</Cell><Cell $head $tight>Description</Cell>
        {MONTHS.map(m => <Cell key={m} $head>{m}</Cell>)}
        <Cell $head $right>2024 in total</Cell><Blank />

        {ACCOUNTS.map((a, i) => (
            <React.Fragment key={a.id}>
                <RowHead>{i + 4}</RowHead><Blank />
                <Cell>{a.id}</Cell><Cell $tight>{a.name}</Cell>
                {[...a.vals, '0', '0', '0', '0'].map((v, j) => <Cell key={j} $right>{v}</Cell>)}
                <Cell $right $bold>{a.total}</Cell><Blank />
            </React.Fragment>
        ))}

        <RowHead>15</RowHead><Blank />
        <Cell /><Cell $bold $tight>Total emissions</Cell>
        {TOTALS.map((v, j) => <Cell key={j} $right $bold>{v}</Cell>)}
        <Cell $right $bold>1687.97</Cell><Blank />

        {range(16, 32).map(n => (
            <React.Fragment key={n}>
                <RowHead>{n}</RowHead>
                {COLS.map(c => <Blank key={c} />)}
            </React.Fragment>
        ))}
    </Grid>
)

const App = () => (
    <Page>
        <GlobalStyle />
        <Win $x={46} $y={74} $w={1309} $h={830}>
            <Chrome inset={3} />
            <SheetArea><EnergySheet /></SheetArea>
            <SheetTabs>
                <Arrows><Tri $dir="l" /><Tri $dir="r" /></Arrows>
                <SheetTab $w={79}>Info</SheetTab>
                <SheetTab $w={161}>Emissions by account</SheetTab>
                <SheetTab $w={150}>Emissions by scope</SheetTab>
                <SheetTab $w={160} $on>Energy consumption</SheetTab>
            </SheetTabs>
            <StatusBar>
                <Ready>Ready</Ready>
                <Access><AccessIcon />Accessibility: Good to go</Access>
            </StatusBar>
            <Strip $h={10} $bg="linear-gradient(90deg, #3f3035, #57444a 40%, #50434f 70%, #3c4058)" />
        </Win>
        <Win $x={612} $y={239} $w={1316} $h={824}>
            <Chrome inset={10} />
            <SheetArea>
                <AccountSheet />
                <ScrollThumb />
            </SheetArea>
            <SheetTabs>
                <Arrows><Tri $dir="l" /><Tri $dir="r" /></Arrows>
                <SheetTab $w={80}>Info</SheetTab>
                <SheetTab $w={165} $on>Emissions by account</SheetTab>
                <SheetTab $w={148} $noSep>Emissions by scope</SheetTab>
                <SheetTab $w={154}>Energy consumption</SheetTab>
                <SheetTab $w={39}><Glyph $size={20} $c="#555">+</Glyph></SheetTab>
                <TabEnd />
            </SheetTabs>
            <StatusBar>
                <Ready>Ready</Ready>
                <Access><AccessIcon />Accessibility: Good to go</Access>
                <ViewArea>
                    <ViewOn><GridViewIcon /></ViewOn>
                    <Slot $w={35}><PageViewIcon /></Slot>
                    <Slot $w={36}><BreakViewIcon /></Slot>
                    <Slot $w={24}><Glyph $size={15} $c="#666" $bold>−</Glyph></Slot>
                    <ZoomTrack />
                    <Slot $w={22}><Glyph $size={15} $c="#666" $bold>+</Glyph></Slot>
                    <Percent>100%</Percent>
                </ViewArea>
            </StatusBar>
            <Strip $h={4} $bg="linear-gradient(90deg, #4a3a3e, #3e3d52 40%, #25304f 70%, #1b2646)" />
        </Win>
    </Page>
)

export default App
